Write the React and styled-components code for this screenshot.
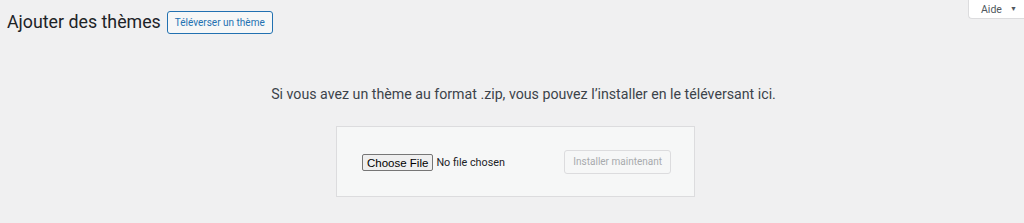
import styled, { createGlobalStyle } from 'styled-components';

const GlobalStyle = createGlobalStyle`
	html, body {
		margin: 0;
		padding: 0;
		background: #f0f0f1;
	}
	body {
		width: 1024px;
		height: 223px;
		overflow: hidden;
		font-family: Roboto, 'Open Sans', sans-serif;
		color: #3c434a;
	}
`;

const Page = styled.div`
	display: flex;
	flex-direction: column;
	height: 223px;
`;

const TopBar = styled.div`
	display: flex;
	justify-content: space-between;
	align-items: flex-start;
`;

const Heading = styled.div`
	display: flex;
	align-items: center;
	gap: 6px;
	padding: 10px 0 0 7px;
`;

const Title = styled.h1`
	margin: 0;
	font-size: 17.8px;
	font-weight: 400;
	line-height: 24px;
	color: #1d2327;
`;

const OutlineButton = styled.button`
	display: inline-flex;
	align-items: center;
	height: 23px;
	padding: 0 7px;
	font-family: inherit;
	font-size: 10px;
	color: #2271b1;
	background: #f6f7f7;
	border: 1px solid #2271b1;
	border-radius: 3px;
	box-sizing: border-box;
`;

const HelpTab = styled.div`
	display: flex;
	align-items: center;
	gap: 8px;
	height: 19px;
	width: 56px;
	box-sizing: border-box;
	padding-left: 12px;
	font-size: 10.5px;
	color: #50575e;
	background: #fff;
	border: 1px solid #dcdcde;
	border-top: none;
	border-right: none;
	border-radius: 0 0 0 4px;
`;

const Caret = styled.span`
	font-size: 7px;
	color: #50575e;
`;

const Upload = styled.div`
	display: flex;
	flex-direction: column;
	align-items: center;
	padding-top: 50px;
`;

const HelpText = styled.p`
	margin: 0 0 0 23px;
	font-size: 14.2px;
	line-height: 20px;
	color: #3c434a;
`;

const Form = styled.div`
	display: flex;
	align-items: center;
	justify-content: space-between;
	width: 359px;
	height: 71px;
	box-sizing: border-box;
	margin: 22px 0 0 7px;
	padding: 0 23px 0 25px;
	background: #f6f7f7;
	border: 1px solid #dcdcde;
`;

const FileField = styled.div`
	display: flex;
	align-items: center;
	gap: 3px;
	margin-top: 2px;
`;

const ChooseButton = styled.span`
	display: inline-flex;
	align-items: center;
	height: 17px;
	padding: 0 4px;
	box-sizing: border-box;
	font-family: 'Liberation Sans', Arial, sans-serif;
	font-size: 11.5px;
	color: #000;
	background: #efefef;
	border: 1px solid #767676;
	border-radius: 2px;
`;

const FileName = styled.span`
	font-size: 10.8px;
	color: #1d2327;
`;

const DisabledButton = styled.button`
	height: 24px;
	padding: 0 8px;
	font-family: inherit;
	font-size: 10px;
	color: #a7aaad;
	background: #f6f7f7;
	border: 1px solid #dcdcde;
	border-radius: 3px;
`;

const App = () => {
	return (
		<Page>
			<GlobalStyle />
			<TopBar>
				<Heading>
					<Title>Ajouter des thèmes</Title>
					<OutlineButton>Téléverser un thème</OutlineButton>
				</Heading>
				<HelpTab>
					Aide <Caret>▼</Caret>
				</HelpTab>
			</TopBar>
			<Upload>
				<HelpText>
					Si vous avez un thème au format .zip, vous pouvez l’installer en le téléversant ici.
				</HelpText>
				<Form>
					<FileField>
						<ChooseButton>Choose File</ChooseButton>
						<FileName>No file chosen</FileName>
					</FileField>
					<DisabledButton disabled>Installer maintenant</DisabledButton>
				</Form>
			</Upload>
		</Page>
	);
};

export default App;
